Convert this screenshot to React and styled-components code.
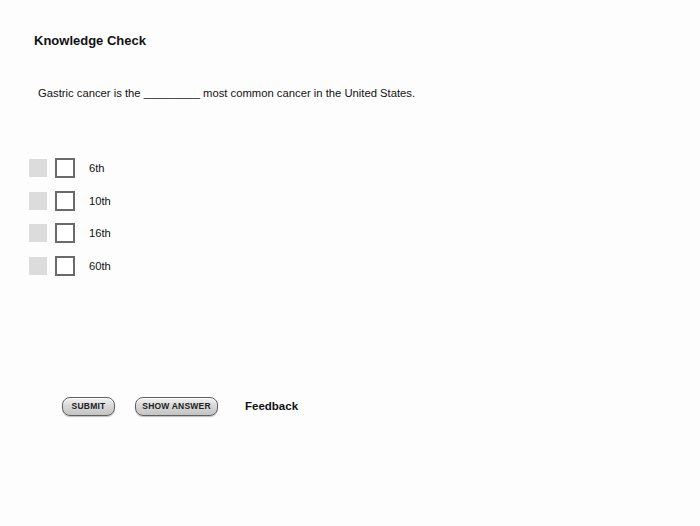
import React from "react";
import styled, { createGlobalStyle } from "styled-components";

const Global = createGlobalStyle`
  html, body { margin: 0; padding: 0; background: #fdfdfd; }
  body { font-family: "Liberation Sans", Arial, sans-serif; color: #111; }
`;

const Page = styled.div`
  width: 700px;
  height: 526px;
  box-sizing: border-box;
  padding: 33px 0 0 0;
  display: flex;
  flex-direction: column;
`;

const Title = styled.h1`
  margin: 0 0 0 34px;
  font-size: 13px;
  font-weight: bold;
  line-height: 16px;
  color: #111;
`;

const Question = styled.p`
  margin: 37px 0 0 38px;
  font-size: 11.25px;
  line-height: 14px;
  color: #111;
`;

const Options = styled.div`
  margin: 58px 0 0 29px;
  display: flex;
  flex-direction: column;
  gap: 12.5px;
`;

const Option = styled.div`
  display: flex;
  align-items: center;
  height: 20px;
`;

const Marker = styled.div`
  width: 18px;
  height: 18px;
  background: #dcdcdc;
`;

const Box = styled.div`
  margin-left: 8px;
  width: 16px;
  height: 16px;
  border: 2px solid #6a6a6a;
  background: #fff;
`;

const Label = styled.span`
  margin-left: 14px;
  font-size: 11.2px;
  color: #111;
`;

const Actions = styled.div`
  margin: 121px 0 0 62px;
  display: flex;
  align-items: center;
`;

const Button = styled.button`
  height: 19px;
  width: ${(p) => p.$w}px;
  padding: 0;
  margin-right: ${(p) => p.$gap}px;
  border: 1px solid #5e5e5e;
  border-radius: 8px;
  background: linear-gradient(#f2f2f2 0%, #d6d6d6 50%, #c4c4c4 100%);
  box-shadow: inset 0 1px 0 #fff, 0 1px 1px rgba(0,0,0,0.25);
  font-family: "Liberation Sans", Arial, sans-serif;
  font-size: 8.5px;
  font-weight: bold;
  color: #222;
  letter-spacing: 0.2px;
  cursor: pointer;
`;

const Feedback = styled.span`
  font-size: 11.5px;
  font-weight: bold;
  color: #111;
`;

const options = ["6th", "10th", "16th", "60th"];

export default function App() {
  return (
    <>
      <Global />
      <Page>
        <Title>Knowledge Check</Title>
        <Question>Gastric cancer is the _________ most common cancer in the United States.</Question>
        <Options>
          {options.map((o) => (
            <Option key={o}>
              <Marker />
              <Box />
              <Label>{o}</Label>
            </Option>
          ))}
        </Options>
        <Actions>
          <Button $w={53} $gap={20}>SUBMIT</Button>
          <Button $w={83} $gap={27}>SHOW ANSWER</Button>
          <Feedback>Feedback</Feedback>
        </Actions>
      </Page>
    </>
  );
}
